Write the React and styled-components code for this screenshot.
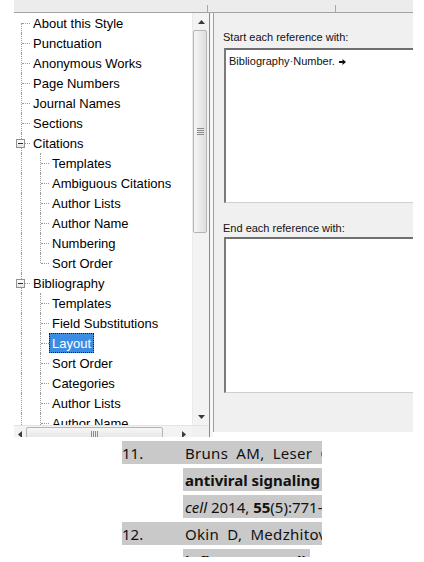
import React from "react";
import styled, { createGlobalStyle } from "styled-components";

const GlobalStyle = createGlobalStyle`
  html, body {
    margin: 0;
    padding: 0;
    background: #ffffff;
  }
  body {
    font-family: "Liberation Sans", Arial, sans-serif;
    color: #000;
  }
`;

const treeItems = [
  { label: "About this Style", guides: ["start"] },
  { label: "Punctuation", guides: ["tee"] },
  { label: "Anonymous Works", guides: ["tee"] },
  { label: "Page Numbers", guides: ["tee"] },
  { label: "Journal Names", guides: ["tee"] },
  { label: "Sections", guides: ["tee"] },
  { label: "Citations", guides: ["tee"], expanded: true },
  { label: "Templates", guides: ["pass", "tee"] },
  { label: "Ambiguous Citations", guides: ["pass", "tee"] },
  { label: "Author Lists", guides: ["pass", "tee"] },
  { label: "Author Name", guides: ["pass", "tee"] },
  { label: "Numbering", guides: ["pass", "tee"] },
  { label: "Sort Order", guides: ["pass", "end"] },
  { label: "Bibliography", guides: ["tee"], expanded: true },
  { label: "Templates", guides: ["pass", "tee"] },
  { label: "Field Substitutions", guides: ["pass", "tee"] },
  { label: "Layout", guides: ["pass", "tee"], selected: true },
  { label: "Sort Order", guides: ["pass", "tee"] },
  { label: "Categories", guides: ["pass", "tee"] },
  { label: "Author Lists", guides: ["pass", "tee"] },
  { label: "Author Name", guides: ["pass", "tee"] },
  { label: "Editor Lists", guides: ["pass", "tee"] },
];

const Page = styled.div`
  width: 424px;
  height: 562px;
  overflow: hidden;
  background: #fff;
`;

// Dialog (cropped) =========================
const Dialog = styled.div`
  margin-left: 14px;
  width: 399px;
  height: 437px;
  overflow: hidden;
  display: flex;
  flex-direction: column;
`;

const TopStrip = styled.div`
  height: 12px;
  flex: none;
  background:
    linear-gradient(#a8a8a8, #a8a8a8) 193px 5px / 1px 7px no-repeat,
    linear-gradient(#a8a8a8, #a8a8a8) 321px 5px / 1px 7px no-repeat,
    #ececec;
  border-bottom: 1px solid #a3a3a3;
`;

const DialogBody = styled.div`
  flex: 1;
  display: flex;
  align-items: flex-start;
  min-height: 0;
`;

const TreePane = styled.div`
  width: 196px;
  height: 429px;
  flex: none;
  box-sizing: border-box;
  border-right: 1px solid #8a8a8a;
  background: #fff;
  display: flex;
  flex-direction: column;
`;

const TreeMain = styled.div`
  height: 412px;
  flex: none;
  display: flex;
`;

const TreeList = styled.ul`
  flex: 1;
  list-style: none;
  margin: 0;
  padding: 0;
  overflow: hidden;
  font-size: 13px;
`;

const TreeRow = styled.li`
  height: 20px;
  display: flex;
  align-items: stretch;
`;

const Guide = styled.span`
  position: relative;
  width: 19px;
  flex: none;

  &::before {
    content: "";
    display: ${({ $line }) => ($line === "none" ? "none" : "block")};
    position: absolute;
    left: 7px;
    top: ${({ $line }) => ($line === "start" ? "10px" : "0")};
    bottom: ${({ $line }) => ($line === "end" ? "10px" : "0")};
    border-left: 1px dotted #9a9a9a;
  }

  &::after {
    content: "";
    display: ${({ $line }) => ($line === "pass" || $line === "none" ? "none" : "block")};
    position: absolute;
    left: 8px;
    width: 8px;
    top: 10px;
    border-top: 1px dotted #9a9a9a;
  }
`;

const Expander = styled.span`
  position: absolute;
  z-index: 1;
  left: 2px;
  top: 6px;
  width: 9px;
  height: 9px;
  box-sizing: border-box;
  border: 1px solid #929292;
  background: linear-gradient(#ffffff, #e4e4e4);

  &::after {
    content: "";
    position: absolute;
    left: 1px;
    top: 3px;
    width: 5px;
    height: 1px;
    background: #2b2b2b;
  }
`;

const Label = styled.span`
  margin-left: -3px;
  padding: 0 2px;
  height: 20px;
  box-sizing: border-box;
  line-height: 20px;
  white-space: nowrap;
  border: 1px dotted ${({ $selected }) => ($selected ? "#1c1c1c" : "transparent")};
  background: ${({ $selected }) => ($selected ? "#3b8de4" : "transparent")};
  color: ${({ $selected }) => ($selected ? "#fff" : "#000")};
  overflow: hidden;
`;

// Scrollbars ===============================
const VScroll = styled.div`
  width: 17px;
  flex: none;
  display: flex;
  flex-direction: column;
  background: #f3f3f3;
  border-left: 1px solid #ebebeb;
  box-sizing: border-box;
`;

const ArrowButton = styled.div`
  height: 17px;
  flex: none;
  display: flex;
  align-items: center;
  justify-content: center;
`;

const Track = styled.div`
  flex: 1;
  display: flex;
  flex-direction: ${({ $horizontal }) => ($horizontal ? "row" : "column")};
`;

const Thumb = styled.div`
  flex: none;
  box-sizing: border-box;
  margin: ${({ $horizontal }) => ($horizontal ? "1px 0" : "0 2px 0 0")};
  width: ${({ $horizontal, $size }) => ($horizontal ? `${$size}px` : "auto")};
  height: ${({ $horizontal, $size }) => ($horizontal ? "auto" : `${$size}px`)};
  border: 1px solid #b4b4b4;
  border-radius: 2px;
  background: ${({ $horizontal }) =>
    $horizontal
      ? "linear-gradient(#f6f6f6, #e2e2e2)"
      : "linear-gradient(90deg, #f6f6f6, #dedede)"};
  display: flex;
  align-items: center;
  justify-content: center;
`;

const Grip = styled.div`
  width: 7px;
  height: 7px;
  background: ${({ $horizontal }) =>
    $horizontal
      ? "repeating-linear-gradient(90deg, #8a8a8a 0 1px, transparent 1px 2px)"
      : "repeating-linear-gradient(#8a8a8a 0 1px, transparent 1px 2px)"};
`;

const HScroll = styled.div`
  height: 17px;
  flex: none;
  display: flex;
  background: #f3f3f3;
  border-top: 1px solid #e4e4e4;
`;

const HArrow = styled.div`
  width: ${({ $w }) => $w}px;
  flex: none;
  display: flex;
  align-items: center;
  justify-content: center;
`;

const Corner = styled.div`
  width: 17px;
  flex: none;
  background: #f0f0f0;
`;

const Spacer = styled.div`
  width: 3px;
  height: 425px;
  flex: none;
  background: #f7f7f7;
`;

// Right pane ===============================
const RightPane = styled.div`
  flex: 1;
  height: 419px;
  box-sizing: border-box;
  border-left: 1px solid #9f9f9f;
  background: #f0f0f0;
  padding-left: 10px;
  display: flex;
  flex-direction: column;
  overflow: hidden;
`;

const FieldLabel = styled.div`
  margin-top: ${({ $top }) => $top}px;
  margin-left: -1px;
  height: 14px;
  line-height: 14px;
  font-size: 11px;
  color: #111;
  white-space: nowrap;
`;

const TextBox = styled.div`
  margin-top: ${({ $gap }) => $gap}px;
  height: ${({ $h }) => $h}px;
  width: 240px;
  flex: none;
  box-sizing: border-box;
  background: #fff;
  border-top: 2px solid #6f6f6f;
  border-left: 2px solid #7a7a7a;
  border-bottom: 1px solid #cfcfcf;
  padding: 4px 3px;
  font-size: 11px;
  line-height: 14px;
  color: #111;
  display: flex;
  align-items: flex-start;
  white-space: nowrap;
`;

const SpaceDot = styled.span`
  color: #444;
`;

const TabMark = styled.svg`
  margin: 5px 0 0 4px;
  flex: none;
`;

// Document ================================
const DocBlock = styled.div`
  margin: 4px 0 0 122px;
  width: 200px;
  height: 116px;
  overflow: hidden;
  font-family: "Noto Sans", "Open Sans", sans-serif;
  font-size: 15px;
  color: #111;
`;

const DocLine = styled.div`
  display: flex;
  height: 23px;
  margin-bottom: 4px;
  align-items: stretch;
  white-space: nowrap;
`;

const NumCell = styled.div`
  width: 61px;
  flex: none;
  line-height: 24px;
  background: ${({ $shaded }) => ($shaded ? "#c9c9c9" : "transparent")};
`;

const TextCell = styled.div`
  flex: ${({ $width }) => ($width ? "none" : "1")};
  width: ${({ $width }) => ($width ? `${$width}px` : "auto")};
  padding-left: 2px;
  line-height: 24px;
  overflow: hidden;
  background: #c9c9c9;
  word-spacing: ${({ $spread }) => ($spread ? "4px" : "0")};
  letter-spacing: ${({ $spread }) => ($spread ? "0.3px" : "0")};
`;

function Tree() {
  return (
    <TreeList>
      {treeItems.map((item, i) => (
        <TreeRow key={i}>
          {item.guides.map((g, j) => (
            <Guide key={j} $line={g}>
              {item.expanded && j === item.guides.length - 1 && <Expander />}
            </Guide>
          ))}
          <Label $selected={item.selected}>{item.label}</Label>
        </TreeRow>
      ))}
    </TreeList>
  );
}

const Tri = ({ dir }) => {
  const pts = {
    up: "0,4 3.5,0 7,4",
    down: "0,0 3.5,4 7,0",
    left: "4,0 0,3.5 4,7",
    right: "0,0 4,3.5 0,7",
  }[dir];
  const vertical = dir === "up" || dir === "down";
  return (
    <svg width={vertical ? 7 : 4} height={vertical ? 4 : 7} viewBox={vertical ? "0 0 7 4" : "0 0 4 7"}>
      <polygon points={pts} fill="#3a3a3a" />
    </svg>
  );
};

export default function App() {
  return (
    <Page>
      <GlobalStyle />
      <Dialog>
        <TopStrip />
        <DialogBody>
          <TreePane>
            <TreeMain>
              <Tree />
              <VScroll>
                <ArrowButton>
                  <Tri dir="up" />
                </ArrowButton>
                <Track>
                  <Thumb $size={203}>
                    <Grip />
                  </Thumb>
                </Track>
                <ArrowButton>
                  <Tri dir="down" />
                </ArrowButton>
              </VScroll>
            </TreeMain>
            <HScroll>
              <HArrow $w={12}>
                <Tri dir="left" />
              </HArrow>
              <Track $horizontal>
                <Thumb $horizontal $size={137}>
                  <Grip $horizontal />
                </Thumb>
              </Track>
              <HArrow $w={17}>
                <Tri dir="right" />
              </HArrow>
              <Corner />
            </HScroll>
          </TreePane>
          <Spacer />
          <RightPane>
            <FieldLabel $top={17}>Start each reference with:</FieldLabel>
            <TextBox $gap={4} $h={155}>
              Bibliography<SpaceDot>·</SpaceDot>Number.
              <TabMark width="7" height="6" viewBox="0 0 7 6">
                <path d="M0 2h3.5V0L7 3 3.5 6V4H0z" fill="#111" />
              </TabMark>
            </TextBox>
            <FieldLabel $top={18}>End each reference with:</FieldLabel>
            <TextBox $gap={2} $h={156} />
          </RightPane>
        </DialogBody>
      </Dialog>

      <DocBlock>
        <DocLine>
          <NumCell $shaded>11.</NumCell>
          <TextCell $spread>Bruns AM, Leser GP, Lamb RA</TextCell>
        </DocLine>
        <DocLine>
          <NumCell />
          <TextCell>
            <b>antiviral signaling by the</b>
          </TextCell>
        </DocLine>
        <DocLine>
          <NumCell />
          <TextCell>
            <i>cell</i> 2014, <b>55</b>(5):771-781.
          </TextCell>
        </DocLine>
        <DocLine>
          <NumCell $shaded>12.</NumCell>
          <TextCell $spread>Okin D, Medzhitov R</TextCell>
        </DocLine>
        <DocLine>
          <NumCell />
          <TextCell $width={125}>
            <b>inflammatory diseases</b>
          </TextCell>
        </DocLine>
      </DocBlock>
    </Page>
  );
}
